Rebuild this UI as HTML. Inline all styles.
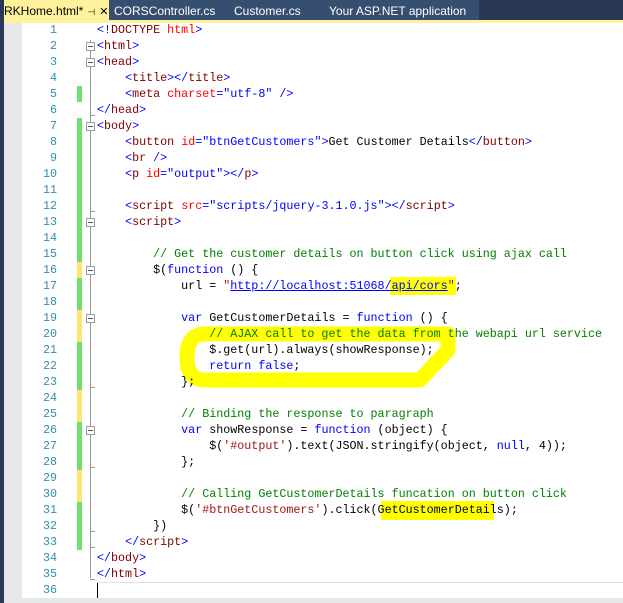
<!DOCTYPE html>
<html><head><style>
body{margin:0;width:623px;height:603px;overflow:hidden;background:#fff;position:relative;font-family:"Liberation Mono",monospace;font-size:11.7px}
.tabs{position:absolute;left:0;top:0;width:623px;height:20px;background:#293955}
.tab{position:absolute;top:0;height:20px;line-height:22px;font-family:"Liberation Sans",sans-serif;font-size:12px;color:#fff;white-space:nowrap}
.lstrip{position:absolute;left:0;top:0;width:4px;height:603px;background:#293955}
.gm{position:absolute;left:4px;top:23px;width:18px;height:580px;background:#e6e7e8}
.ln{position:absolute;left:22px;width:35px;text-align:right;color:#2b91af;height:16px;line-height:16px;top:0}
.cl{position:absolute;left:97px;white-space:pre;height:16px;line-height:16px;color:#000;z-index:2}
.bar{position:absolute;left:77px;width:5px;height:16px}
.g{background:#6ce26c}.y{background:#fee472}
.fb{position:absolute;left:86px;width:7px;height:7px;border:1px solid #999;background:#fff;z-index:1}
.fb:after{content:"";position:absolute;left:1px;top:3px;width:5px;height:1px;background:#555}
.d{color:#0000ff}.t{color:#800000}.a{color:#ff0000}.c{color:#008000}.k{color:#0000ff}.s{color:#a31515}
.u{color:#0000ff;text-decoration:underline}
</style></head><body>
<div class="tabs">
<div class="tab" style="left:0;width:109px;background:#fff29d;color:#000;padding-left:4px;box-sizing:border-box;overflow:hidden">RKHome.html*<span style="font-size:9px;margin-left:4px">⊣</span><span style="margin-left:4px;font-size:11px">✕</span></div>
<div style="position:absolute;left:109px;top:0;width:370px;height:20px;background:#364e6f"></div>
<div class="tab" style="left:114px">CORSController.cs</div>
<div class="tab" style="left:234px">Customer.cs</div>
<div class="tab" style="left:329px">Your ASP.NET application</div>
</div>
<div style="position:absolute;left:4px;top:20px;width:619px;height:3px;background:#fff29d"></div>
<div class="lstrip"></div>
<div class="gm"></div>
<div style="position:absolute;left:22px;top:598px;width:601px;height:5px;background:#e6e7e8"></div>
<div style="position:absolute;left:90px;top:40px;width:1px;height:538px;background:#999"></div>
<div style="position:absolute;left:97px;top:582px;width:526px;height:1px;background:#e0e0e0"></div>
<div style="position:absolute;left:97px;top:583px;width:1px;height:15px;background:#000"></div>

<svg style="position:absolute;left:0;top:0;z-index:1" width="623" height="603">
<path d="M205,334 L448,334 L448,350 L420,380 L205,380 Q187,380 187,357 Q187,334 205,334 Z" fill="none" stroke="#ffff00" stroke-width="15" stroke-linejoin="round"/>
<rect x="390" y="277" width="66" height="18" fill="#ffff00"/>
<rect x="381" y="501" width="113" height="19" fill="#ffff00"/>
</svg>

<div id="g"></div>
<script>
(function(){
var L=[
'<span class="d">&lt;!</span><span class="t">DOCTYPE</span> <span class="a">html</span><span class="d">&gt;</span>',
'<span class="d">&lt;</span><span class="t">html</span><span class="d">&gt;</span>',
'<span class="d">&lt;</span><span class="t">head</span><span class="d">&gt;</span>',
'    <span class="d">&lt;</span><span class="t">title</span><span class="d">&gt;&lt;/</span><span class="t">title</span><span class="d">&gt;</span>',
'    <span class="d">&lt;</span><span class="t">meta</span> <span class="a">charset</span><span class="d">="utf-8" /&gt;</span>',
'<span class="d">&lt;/</span><span class="t">head</span><span class="d">&gt;</span>',
'<span class="d">&lt;</span><span class="t">body</span><span class="d">&gt;</span>',
'    <span class="d">&lt;</span><span class="t">button</span> <span class="a">id</span><span class="d">="btnGetCustomers"&gt;</span>Get Customer Details<span class="d">&lt;/</span><span class="t">button</span><span class="d">&gt;</span>',
'    <span class="d">&lt;</span><span class="t">br</span> <span class="d">/&gt;</span>',
'    <span class="d">&lt;</span><span class="t">p</span> <span class="a">id</span><span class="d">="output"&gt;&lt;/</span><span class="t">p</span><span class="d">&gt;</span>',
'',
'    <span class="d">&lt;</span><span class="t">script</span> <span class="a">src</span><span class="d">="scripts/jquery-3.1.0.js"&gt;&lt;/</span><span class="t">script</span><span class="d">&gt;</span>',
'    <span class="d">&lt;</span><span class="t">script</span><span class="d">&gt;</span>',
'',
'        <span class="c">// Get the customer details on button click using ajax call</span>',
'        $(<span class="k">function</span> () {',
'            url = <span class="s">"</span><span class="u">http://localhost:51068/api/cors</span><span class="s">"</span>;',
'',
'            <span class="k">var</span> GetCustomerDetails = <span class="k">function</span> () {',
'                <span class="c">// AJAX call to get the data from the webapi url service</span>',
'                $.get(url).always(showResponse);',
'                <span class="k">return</span> <span class="k">false</span>;',
'            };',
'',
'            <span class="c">// Binding the response to paragraph</span>',
'            <span class="k">var</span> showResponse = <span class="k">function</span> (object) {',
'                $(<span class="s">\'#output\'</span>).text(JSON.stringify(object, <span class="k">null</span>, 4));',
'            };',
'',
'            <span class="c">// Calling GetCustomerDetails funcation on button click</span>',
'            $(<span class="s">\'#btnGetCustomers\'</span>).click(GetCustomerDetails);',
'        })',
'    <span class="d">&lt;/</span><span class="t">script</span><span class="d">&gt;</span>',
'<span class="d">&lt;/</span><span class="t">body</span><span class="d">&gt;</span>',
'<span class="d">&lt;/</span><span class="t">html</span><span class="d">&gt;</span>',
''];
var bars={5:'g',16:'y',17:'g',18:'g',19:'y',20:'y',21:'g',22:'g',23:'g',24:'y',25:'y',26:'g',27:'g',28:'g',29:'y',30:'y',31:'g',32:'g',33:'g'};
for(var i=7;i<=15;i++)bars[i]='g';
var folds=[2,3,7,13,16,19,26];
var h='';
for(var n=1;n<=36;n++){var yy=22+16*(n-1);
h+='<div class="ln" style="top:'+yy+'px">'+n+'</div>';
h+='<div class="cl" style="top:'+yy+'px">'+L[n-1]+'</div>';
if(bars[n])h+='<div class="bar '+bars[n]+'" style="top:'+yy+'px"></div>';
if(folds.indexOf(n)>=0)h+='<div class="fb" style="top:'+(yy+4)+'px"></div>';
if([6,12,23,28,32,33,35].indexOf(n)>=0)h+='<div style="position:absolute;left:90px;top:'+(yy+13)+'px;width:5px;height:1px;background:#999"></div>';
}
document.getElementById('g').innerHTML=h;
})();
</script>
</body></html>
